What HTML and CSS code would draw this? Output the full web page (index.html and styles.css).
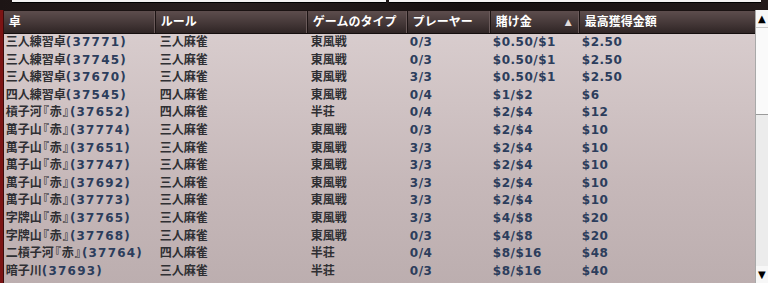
FILE: index.html
```html
<!DOCTYPE html>
<html lang="ja">
<head>
<meta charset="utf-8">
<link rel="stylesheet" href="styles.css">
</head>
<body>
<div class="top">
  <div class="box box-a"></div>
  <div class="box box-b"></div>
</div>
<div class="main">
  <div class="edge"></div>
  <div class="table">
    <div class="head">
      <div class="hc">卓</div>
      <div class="hc">ルール</div>
      <div class="hc">ゲームのタイプ</div>
      <div class="hc">プレーヤー</div>
      <div class="hc sort">賭け金<span class="arrow">▲</span></div>
      <div class="hc last">最高獲得金額</div>
    </div>
    <div class="rows">
      <div class="row"><div class="c">三人練習卓<span class="id">(37771)</span></div><div class="c">三人麻雀</div><div class="c">東風戦</div><div class="c n">0/3</div><div class="c n">$0.50/$1</div><div class="c n">$2.50</div></div>
      <div class="row"><div class="c">三人練習卓<span class="id">(37745)</span></div><div class="c">三人麻雀</div><div class="c">東風戦</div><div class="c n">0/3</div><div class="c n">$0.50/$1</div><div class="c n">$2.50</div></div>
      <div class="row"><div class="c">三人練習卓<span class="id">(37670)</span></div><div class="c">三人麻雀</div><div class="c">東風戦</div><div class="c n">3/3</div><div class="c n">$0.50/$1</div><div class="c n">$2.50</div></div>
      <div class="row"><div class="c">四人練習卓<span class="id">(37545)</span></div><div class="c">四人麻雀</div><div class="c">東風戦</div><div class="c n">0/4</div><div class="c n">$1/$2</div><div class="c n">$6</div></div>
      <div class="row"><div class="c">槓子河<span class="br">『</span>赤<span class="br">』</span><span class="id">(37652)</span></div><div class="c">四人麻雀</div><div class="c">半荘</div><div class="c n">0/4</div><div class="c n">$2/$4</div><div class="c n">$12</div></div>
      <div class="row"><div class="c">萬子山<span class="br">『</span>赤<span class="br">』</span><span class="id">(37774)</span></div><div class="c">三人麻雀</div><div class="c">東風戦</div><div class="c n">0/3</div><div class="c n">$2/$4</div><div class="c n">$10</div></div>
      <div class="row"><div class="c">萬子山<span class="br">『</span>赤<span class="br">』</span><span class="id">(37651)</span></div><div class="c">三人麻雀</div><div class="c">東風戦</div><div class="c n">3/3</div><div class="c n">$2/$4</div><div class="c n">$10</div></div>
      <div class="row"><div class="c">萬子山<span class="br">『</span>赤<span class="br">』</span><span class="id">(37747)</span></div><div class="c">三人麻雀</div><div class="c">東風戦</div><div class="c n">3/3</div><div class="c n">$2/$4</div><div class="c n">$10</div></div>
      <div class="row"><div class="c">萬子山<span class="br">『</span>赤<span class="br">』</span><span class="id">(37692)</span></div><div class="c">三人麻雀</div><div class="c">東風戦</div><div class="c n">3/3</div><div class="c n">$2/$4</div><div class="c n">$10</div></div>
      <div class="row"><div class="c">萬子山<span class="br">『</span>赤<span class="br">』</span><span class="id">(37773)</span></div><div class="c">三人麻雀</div><div class="c">東風戦</div><div class="c n">3/3</div><div class="c n">$2/$4</div><div class="c n">$10</div></div>
      <div class="row"><div class="c">字牌山<span class="br">『</span>赤<span class="br">』</span><span class="id">(37765)</span></div><div class="c">三人麻雀</div><div class="c">東風戦</div><div class="c n">3/3</div><div class="c n">$4/$8</div><div class="c n">$20</div></div>
      <div class="row"><div class="c">字牌山<span class="br">『</span>赤<span class="br">』</span><span class="id">(37768)</span></div><div class="c">三人麻雀</div><div class="c">東風戦</div><div class="c n">0/3</div><div class="c n">$4/$8</div><div class="c n">$20</div></div>
      <div class="row"><div class="c">二槓子河<span class="br">『</span>赤<span class="br">』</span><span class="id">(37764)</span></div><div class="c">四人麻雀</div><div class="c">半荘</div><div class="c n">0/4</div><div class="c n">$8/$16</div><div class="c n">$48</div></div>
      <div class="row"><div class="c">暗子川<span class="id">(37693)</span></div><div class="c">三人麻雀</div><div class="c">半荘</div><div class="c n">0/3</div><div class="c n">$8/$16</div><div class="c n">$40</div></div>
    </div>
  </div>
  <div class="scroll">
    <div class="btn up">▲</div>
    <div class="thumb"></div>
    <div class="track"></div>
    <div class="btn down">▼</div>
  </div>
</div>
</body>
</html>
```
FILE: styles.css
```css
html, body {
  margin: 0;
  padding: 0;
}
body {
  width: 768px;
  height: 283px;
  overflow: hidden;
  background: #171111;
  font-family: "DejaVu Sans", "Noto Sans CJK JP", sans-serif;
  font-weight: bold;
  font-size: 12px;
}
.top {
  height: 10px;
  display: flex;
  background: linear-gradient(90deg, #1d1515, #2a2020 30%, #161010 60%, #241b1b);
}
.box {
  height: 2px;
  background: #f4f2f2;
  border-bottom: 1px solid #000;
}
.box-a { margin-left: 12px; width: 374px; }
.box-b { margin-left: 3px; width: 372px; }
.main {
  display: flex;
  height: 273px;
}
.edge {
  width: 3px;
  background: #7c1414;
  border-right: 1px solid #3a0c0c;
}
.table {
  width: 751px;
  display: flex;
  flex-direction: column;
}
.head {
  display: grid;
  grid-template-columns: 152px 152px 100px 83px 89px 175px;
  height: 22px;
  border-top: 1px solid #1a1212;
  border-bottom: 1px solid #140e0e;
  background: linear-gradient(#5d4d4d, #473a3a 50%, #2f2525);
}
.hc {
  color: #fff;
  line-height: 22px;
  padding-left: 5px;
  border-right: 1px solid #1c1414;
  box-shadow: inset -1px 0 0 #6a5a5a;
  white-space: nowrap;
  position: relative;
}
.hc.last { border-right: none; box-shadow: none; }
.arrow {
  position: absolute;
  left: 74px;
  top: 0;
  font-size: 9px;
  color: #e0dcdc;
}
.rows {
  flex: 1;
  background: linear-gradient(#d8cccd, #c6b8b9 60%, #bcaeaf);
  overflow: hidden;
}
.row {
  display: grid;
  grid-template-columns: 152px 152px 100px 83px 89px 175px;
  height: 17.6px;
  line-height: 17.6px;
}
.c {
  padding-left: 2px;
  color: #2f2f33;
  white-space: nowrap;
}
.row .c:nth-child(2) { padding-left: 4px; }
.row .c:nth-child(3) { padding-left: 3px; }
.br {
  font-feature-settings: "palt";
  padding: 0 1px;
}
.n, .id {
  color: #2c3d5c;
}
.id { letter-spacing: 1.2px; }
.n { letter-spacing: 0.5px; }
.scroll {
  width: 13px;
  display: flex;
  flex-direction: column;
  background: #ececec;
  border-left: 1px solid #a9a9a9;
}
.btn {
  height: 17px;
  font-size: 10px;
  line-height: 17px;
  text-align: center;
  color: #000;
  background: #f7f7f7;
}
.thumb {
  height: 86px;
  background: #fafafa;
  border-top: 1px solid #c9c9c9;
  border-bottom: 1px solid #9a9a9a;
}
.track {
  flex: 1;
  background: #ececec;
}
```
